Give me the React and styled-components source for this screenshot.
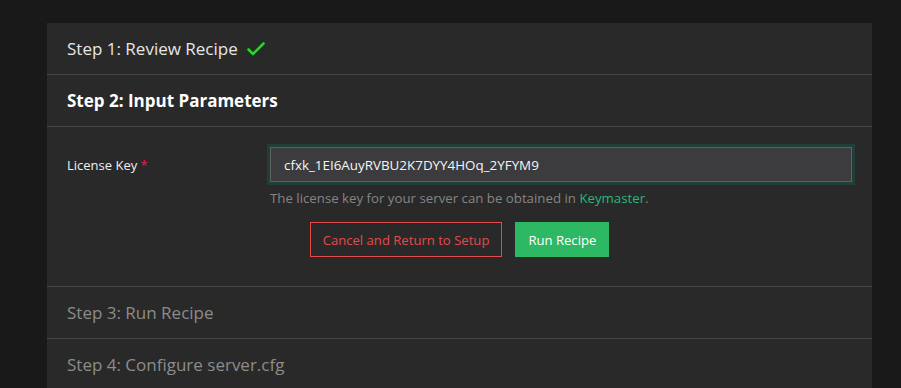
import styled, { createGlobalStyle } from 'styled-components';

const GlobalStyle = createGlobalStyle`
  html, body {
    margin: 0;
    padding: 0;
    background: #191919;
    font-family: 'Open Sans', 'Noto Sans', sans-serif;
  }
`;

const Page = styled.div`
  padding: 23px 29px 0 47px;
  height: 388px;
  box-sizing: border-box;
  overflow: hidden;
`;

const Panel = styled.div`
  background: #292929;
  width: 825px;
  min-height: 365px;
`;

const StepHeader = styled.div`
  display: flex;
  align-items: center;
  gap: 8px;
  height: 51px;
  padding: 0 20px;
  font-size: 17px;
  font-weight: ${(p) => (p.$active ? 700 : 400)};
  color: ${(p) => (p.$muted ? '#8c8c8c' : p.$active ? '#ffffff' : '#e6e6e6')};
  border-bottom: ${(p) => (p.$last ? 'none' : '1px solid #474747')};
`;

const StepBody = styled.div`
  padding: 20px 20px 29px;
  border-bottom: 1px solid #474747;
`;

const FieldRow = styled.div`
  display: grid;
  grid-template-columns: 203px 1fr;
  align-items: start;
`;

const Label = styled.label`
  font-size: 13px;
  color: #f0f0f0;
  padding-top: 9px;
`;

const Required = styled.span`
  color: #e0245e;
`;

const Input = styled.input`
  display: block;
  width: 100%;
  box-sizing: border-box;
  height: 35px;
  padding: 0 13px;
  background: #3c3c3e;
  color: #f5f5f5;
  border: 1px solid #606060;
  box-shadow: 0 0 0 3px #213f38;
  outline: none;
  font-family: inherit;
  font-size: 13.4px;
`;

const Help = styled.div`
  margin-top: 7px;
  font-size: 13.25px;
  color: #858585;
`;

const Link = styled.a`
  color: #28b67a;
  text-decoration: none;
`;

const Actions = styled.div`
  display: flex;
  justify-content: center;
  gap: 13px;
  margin-top: 15px;
`;

const Button = styled.button`
  height: 35px;
  padding: 0 12px;
  font-family: inherit;
  font-size: 13.1px;
  border: 1px solid ${(p) => (p.$danger ? '#e14b4b' : '#2db863')};
  background: ${(p) => (p.$danger ? 'transparent' : '#2db863')};
  color: ${(p) => (p.$danger ? '#e34b4b' : '#ffffff')};
  cursor: pointer;
`;

function Check() {
  return (
    <svg width="20" height="16" viewBox="0 0 20 16">
      <path
        d="M2.5 8.5 L7 13 L17.5 2.5"
        fill="none"
        stroke="#0f3a10"
        strokeWidth="5"
        strokeLinecap="round"
        strokeLinejoin="round"
      />
      <path
        d="M2.5 8.5 L7 13 L17.5 2.5"
        fill="none"
        stroke="#2fd02f"
        strokeWidth="2.6"
        strokeLinecap="round"
        strokeLinejoin="round"
      />
    </svg>
  );
}

export default function App() {
  return (
    <>
      <GlobalStyle />
      <Page>
        <Panel>
          <StepHeader>
            Step 1: Review Recipe <Check />
          </StepHeader>
          <StepHeader $active>Step 2: Input Parameters</StepHeader>
          <StepBody>
            <FieldRow>
              <Label>
                License Key <Required>*</Required>
              </Label>
              <div>
                <Input defaultValue="cfxk_1EI6AuyRVBU2K7DYY4HOq_2YFYM9" />
                <Help>
                  The license key for your server can be obtained in{' '}
                  <Link href="#">Keymaster</Link>.
                </Help>
              </div>
            </FieldRow>
            <Actions>
              <Button $danger>Cancel and Return to Setup</Button>
              <Button>Run Recipe</Button>
            </Actions>
          </StepBody>
          <StepHeader $muted>Step 3: Run Recipe</StepHeader>
          <StepHeader $muted $last>
            Step 4: Configure server.cfg
          </StepHeader>
        </Panel>
      </Page>
    </>
  );
}
